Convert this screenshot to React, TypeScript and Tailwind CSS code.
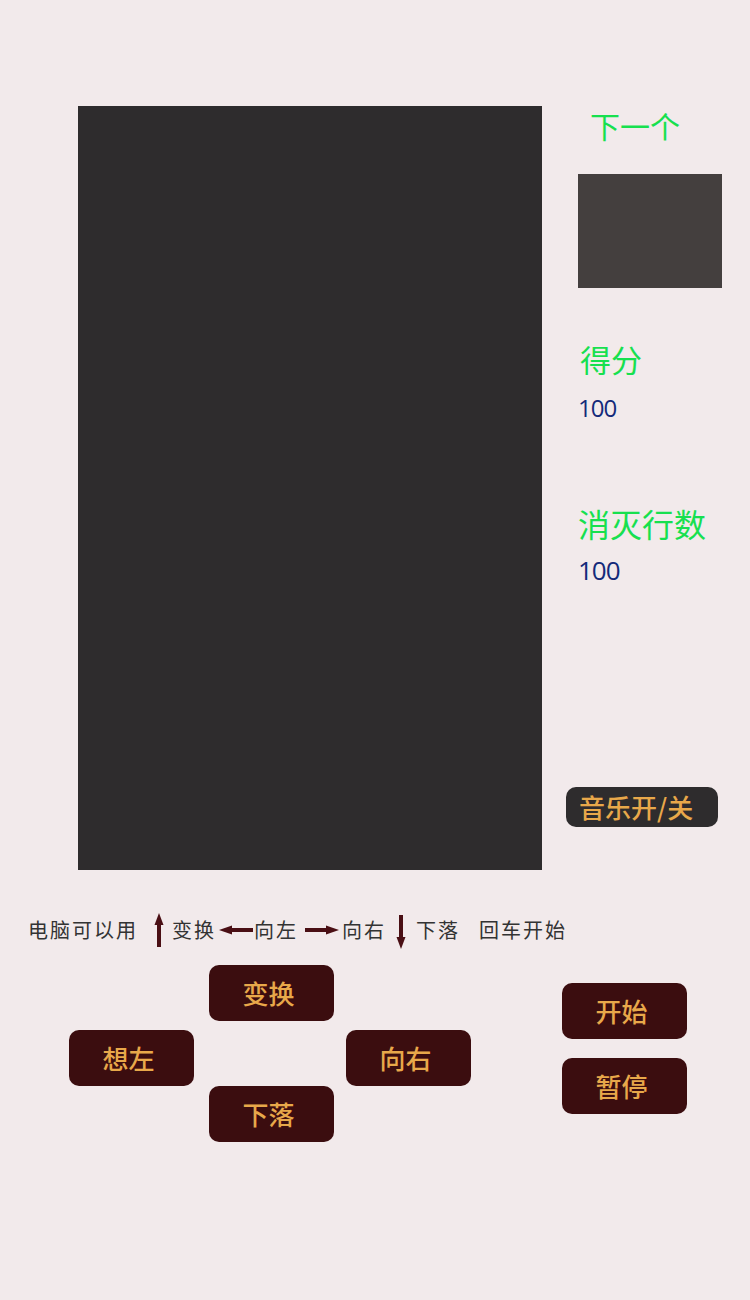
const cn = '"Noto Sans CJK SC", "Noto Sans", sans-serif';
const num = '"Open Sans", "Noto Sans", sans-serif';

const Arrow = ({ dir }: { dir: 'up' | 'down' | 'left' | 'right' }) => {
  const color = '#4a0f14';
  if (dir === 'up' || dir === 'down') {
    return (
      <svg width="10" height="34" viewBox="0 0 10 34" className="shrink-0">
        <g transform={dir === 'down' ? 'rotate(180 5 17)' : undefined}>
          <polygon points="5,0 9.5,12 0.5,12" fill={color} />
          <rect x="3" y="10" width="4" height="24" fill={color} />
        </g>
      </svg>
    );
  }
  return (
    <svg width="34" height="10" viewBox="0 0 34 10" className="shrink-0">
      <g transform={dir === 'right' ? 'rotate(180 17 5)' : undefined}>
        <polygon points="0,5 13,0.5 13,9.5" fill={color} />
        <rect x="11" y="3" width="23" height="4" fill={color} />
      </g>
    </svg>
  );
};

const PadButton = ({ label }: { label: string }) => (
  <button
    className="w-[125px] h-[56px] rounded-[10px] bg-[#3b0d0f] text-[#e8a84a] text-[26px] font-medium leading-none pr-[6px]"
    style={{ fontFamily: cn }}
  >
    {label}
  </button>
);

export default function App() {
  return (
    <div className="h-[1300px] w-[750px] bg-[#f2eaeb] overflow-hidden" style={{ fontFamily: cn }}>
      {/* game area */}
      <div className="flex pt-[106px] pl-[78px]">
        <div className="w-[464px] h-[764px] bg-[#2e2c2d]" />

        <div className="ml-[24px] flex flex-col w-[160px]">
          <div className="pl-[24px] mt-[4px] text-[30px] leading-none text-[#17e04f]">下一个</div>
          <div className="ml-[12px] mt-[34px] w-[144px] h-[114px] bg-[#443f3e]" />

          <div className="pl-[14px] mt-[55px] text-[31px] leading-none text-[#17e04f]">得分</div>
          <div className="pl-[12px] mt-[22px] text-[24px] leading-none text-[#142a7a] tracking-[-1px]" style={{ fontFamily: num }}>
            100
          </div>

          <div className="pl-[12px] mt-[87px] text-[32px] leading-none text-[#17e04f]">消灭行数</div>
          <div className="pl-[12px] mt-[18px] text-[26px] leading-none text-[#142a7a] tracking-[-1px]" style={{ fontFamily: num }}>
            100
          </div>

          <button className="mt-[204px] w-[152px] h-[40px] rounded-[10px] bg-[#2e2c2d] text-[#e8a84a] text-[26px] font-medium leading-none text-left pl-[13px]">
            音乐开/关
          </button>
        </div>
      </div>

      {/* keyboard hints */}
      <div className="flex items-center mt-[41px] pl-[28px] text-[20px] leading-none text-[#333] tracking-[2px]">
        <span>电脑可以用</span>
        <span className="ml-[16px]"><Arrow dir="up" /></span>
        <span className="ml-[8px]">变换</span>
        <span className="ml-[3px]"><Arrow dir="left" /></span>
        <span className="ml-[1px]">向左</span>
        <span className="ml-[7px]"><Arrow dir="right" /></span>
        <span className="ml-[3px]">向右</span>
        <span className="ml-[10px] mt-[4px]"><Arrow dir="down" /></span>
        <span className="ml-[10px]">下落</span>
        <span className="ml-[19px]">回车开始</span>
      </div>

      {/* on-screen controls */}
      <div className="flex mt-[16px] pl-[69px]">
        <div className="mt-[65px]">
          <PadButton label="想左" />
        </div>
        <div className="ml-[15px] flex flex-col">
          <PadButton label="变换" />
          <div className="mt-[65px]">
            <PadButton label="下落" />
          </div>
        </div>
        <div className="ml-[12px] mt-[65px]">
          <PadButton label="向右" />
        </div>
        <div className="ml-[91px] mt-[18px] flex flex-col gap-[19px]">
          <PadButton label="开始" />
          <PadButton label="暂停" />
        </div>
      </div>
    </div>
  );
}
